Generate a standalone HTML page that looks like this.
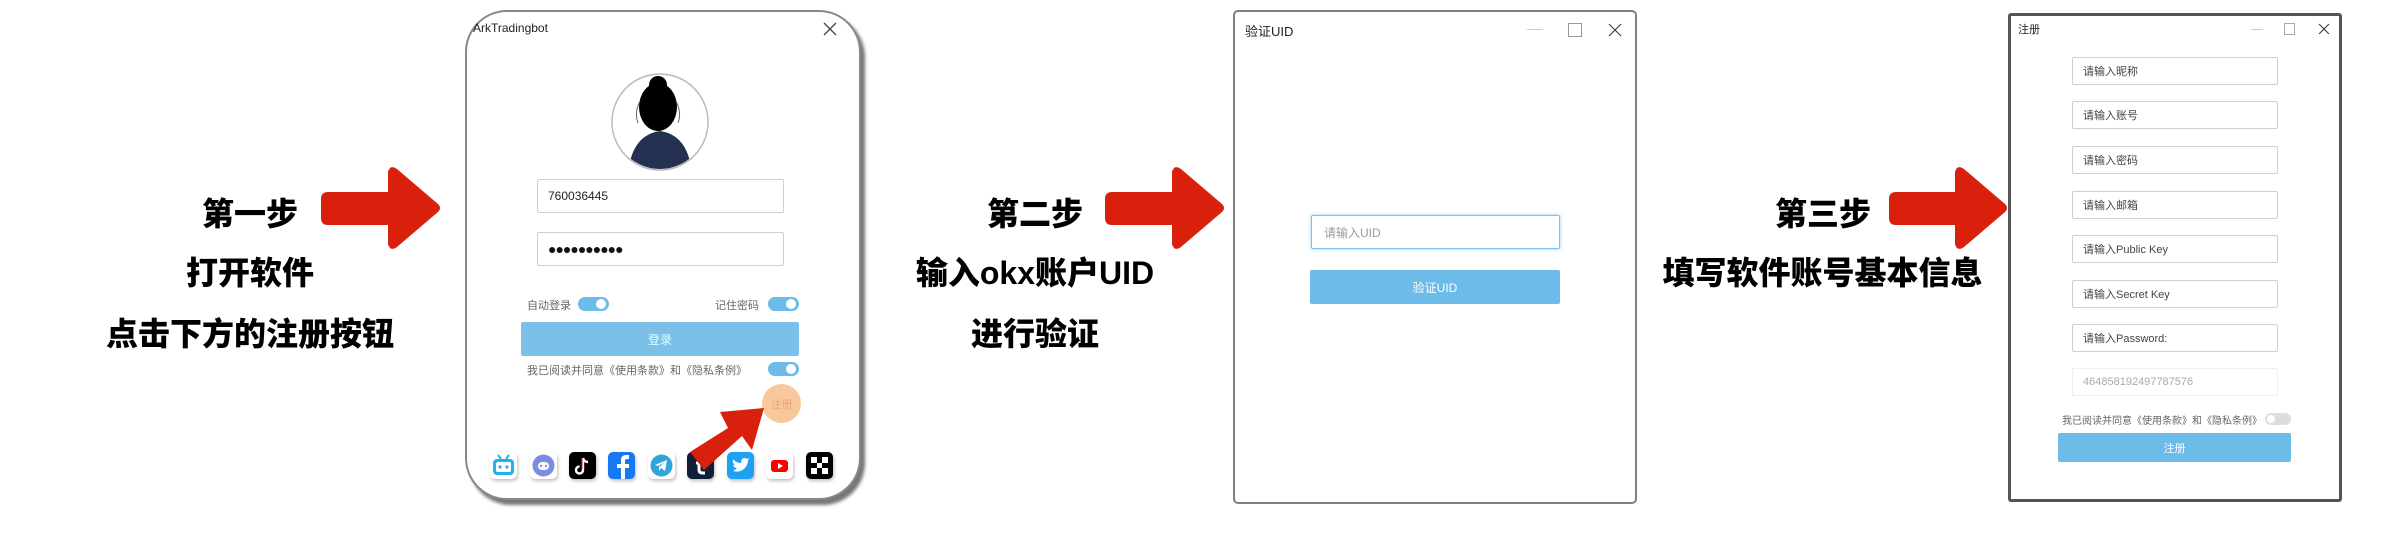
<!DOCTYPE html>
<html><head><meta charset="utf-8"><style>
*{margin:0;padding:0;box-sizing:border-box}
body{width:2399px;height:533px;background:#fff;position:relative;overflow:hidden;font-family:"Liberation Sans","Noto Sans CJK SC",sans-serif}
.a{position:absolute}
.step{position:absolute;font-weight:900;font-size:32px;color:#000;white-space:nowrap;text-align:center;line-height:40px;font-family:"Liberation Sans","Noto Sans CJK SC",sans-serif}
.inp{position:absolute;border:1.5px solid #cfcfcf;border-radius:2px;background:#fff;font-size:11px;color:#444;padding-left:10px;display:flex;align-items:center}
.tg{position:absolute;width:31px;height:14px;border-radius:7px;background:#6cbbe8}
.tg::after{content:"";position:absolute;right:3px;top:2px;width:10px;height:10px;border-radius:50%;background:#fff}
.ic{position:absolute;width:27px;height:27px;border-radius:5px;top:452px;box-shadow:1px 2px 3px rgba(0,0,0,.25)}
</style></head><body>

<svg class="a" style="left:0;top:0" width="2399" height="533">
<g fill="#d9200c">
<path d="M328 192 H388 V172 Q390 164 397 169 L438 204 Q442 208 438 212 L397 247 Q390 252 388 244 V225 H328 Q321 225 321 218 V199 Q321 192 328 192Z"/>
<path d="M1112 192 H1172 V172 Q1174 164 1181 169 L1222 204 Q1226 208 1222 212 L1181 247 Q1174 252 1172 244 V225 H1112 Q1105 225 1105 218 V199 Q1105 192 1112 192Z"/>
<path d="M1896 192 H1955 V172 Q1957 164 1964 169 L2005 204 Q2009 208 2005 212 L1964 247 Q1957 252 1955 244 V225 H1896 Q1889 225 1889 218 V199 Q1889 192 1896 192Z"/>
</g>
</svg>
<div class="step" style="left:150px;top:194px;width:200px">第一步</div>
<div class="step" style="left:150px;top:253px;width:200px">打开软件</div>
<div class="step" style="left:90px;top:314px;width:320px">点击下方的注册按钮</div>

<div class="step" style="left:935px;top:194px;width:200px">第二步</div>
<div class="step" style="left:895px;top:253px;width:280px">输入okx账户UID</div>
<div class="step" style="left:935px;top:314px;width:200px">进行验证</div>

<div class="step" style="left:1723px;top:194px;width:200px">第三步</div>
<div class="step" style="left:1650px;top:253px;width:345px">填写软件账号基本信息</div>

<!-- window 1 -->
<div class="a" style="left:465px;top:10px;width:396px;height:490px;border-radius:42px;border:2px solid #888;background:#fff;box-shadow:4px 5px 3px #777"></div>
<div class="a" style="left:473px;top:21px;font-size:12px;color:#222">ArkTradingbot</div>
<svg class="a" style="left:823px;top:22px" width="14" height="14"><path d="M1 1L13 13M13 1L1 13" stroke="#444" stroke-width="1.3"/></svg>
<svg class="a" style="left:610px;top:73px" width="100" height="100">
<circle cx="50" cy="49" r="48" fill="#fff" stroke="#bbb" stroke-width="1.5"/>
<clipPath id="c"><circle cx="50" cy="49" r="47"/></clipPath>
<g clip-path="url(#c)">
<path d="M18 100 Q22 62 50 58 Q78 62 82 100Z" fill="#243150"/>
<ellipse cx="48" cy="34" rx="19" ry="24" fill="#000"/>
<circle cx="48" cy="12" r="9" fill="#000"/>
<path d="M30 28 Q24 40 28 50 M66 28 Q72 40 68 50" stroke="#666" fill="none"/>
</g></svg>
<div class="inp" style="left:537px;top:179px;width:247px;height:34px;font-size:12px;color:#222">760036445</div>
<div class="inp" style="left:537px;top:232px;width:247px;height:34px;font-size:14px;color:#111;letter-spacing:-1px">●●●●●●●●●●</div>
<div class="a" style="left:527px;top:297px;font-size:11px;color:#666">自动登录</div>
<div class="tg" style="left:578px;top:297px"></div>
<div class="a" style="left:715px;top:297px;font-size:11px;color:#666">记住密码</div>
<div class="tg" style="left:768px;top:297px"></div>
<div class="a" style="left:521px;top:322px;width:278px;height:34px;background:#7cc0ea;border-radius:2px;color:#dff;font-size:12px;display:flex;align-items:center;justify-content:center">登录</div>
<div class="a" style="left:527px;top:362px;font-size:11px;color:#666">我已阅读并同意《使用条款》和《隐私条例》</div>
<div class="tg" style="left:768px;top:362px"></div>
<div class="a" style="left:762px;top:384px;width:39px;height:39px;border-radius:50%;background:#f8c89a;color:#e9a978;font-size:11px;display:flex;align-items:center;justify-content:center">注册</div>
<div class="ic" style="left:490px;background:#fff"><svg width="27" height="27"><rect x="3" y="7" width="21" height="16" rx="4" fill="#1fb3e8"/><rect x="6" y="10" width="15" height="10" rx="2" fill="#fff"/><circle cx="10" cy="15" r="1.6" fill="#1fb3e8"/><circle cx="17" cy="15" r="1.6" fill="#1fb3e8"/><path d="M8 3L11 7M19 3L16 7" stroke="#1fb3e8" stroke-width="2"/></svg></div>
<div class="ic" style="left:530px;background:#fff"><svg width="27" height="27"><circle cx="13.5" cy="13.5" r="11" fill="#7c8ce0"/><rect x="8" y="10" width="11" height="8" rx="4" fill="#fff"/><circle cx="11" cy="14" r="1.2" fill="#7c8ce0"/><circle cx="16" cy="14" r="1.2" fill="#7c8ce0"/></svg></div>
<div class="ic" style="left:569px;background:#000"><svg width="27" height="27"><path d="M14 6V18A3.5 3.5 0 1 1 10.5 14.5M14 6Q15 10 19 10" stroke="#fff" stroke-width="2.4" fill="none"/><path d="M13 6V17" stroke="#e6245a" stroke-width="1"/></svg></div>
<div class="ic" style="left:608px;background:#1877f2"><svg width="27" height="27"><path d="M17 27V16H21V12H17V9Q17 7 19 7H21V3H18Q13 3 13 8V12H9V16H13V27" fill="#fff"/></svg></div>
<div class="ic" style="left:648px;background:#fff"><svg width="27" height="27"><circle cx="13.5" cy="13.5" r="11" fill="#2ea6d9"/><path d="M7 13L19 8L17 19L13 16L11 19L11 15L17 10L10 14Z" fill="#fff"/></svg></div>
<div class="ic" style="left:687px;background:#0f1f35"><svg width="27" height="27"><path d="M12 6V18Q12 21 16 21H18M9 11H17" stroke="#fff" stroke-width="3" fill="none"/></svg></div>
<div class="ic" style="left:727px;background:#1da1f2"><svg width="27" height="27"><path d="M6 19Q12 21 17 17Q21 13 21 8L23 6L20 7Q18 5 15 7Q14 9 14 11Q9 11 6 7Q5 11 8 13L6 13Q7 16 10 16Q8 18 6 19Z" fill="#fff"/></svg></div>
<div class="ic" style="left:766px;background:#fff"><svg width="27" height="27"><rect x="5" y="8" width="17" height="12" rx="3" fill="#f00"/><path d="M12 11V17L17 14Z" fill="#fff"/></svg></div>
<div class="ic" style="left:806px;background:#000"><svg width="27" height="27" fill="#fff"><rect x="5" y="5" width="6" height="6"/><rect x="16" y="5" width="6" height="6"/><rect x="5" y="16" width="6" height="6"/><rect x="16" y="16" width="6" height="6"/><rect x="11" y="11" width="5" height="5"/></svg></div>
<svg class="a" style="left:0;top:0" width="900" height="533"><path d="M690 452 L728 428 L720 412 L764 408 L752 450 L742 436 L704 470 Z" fill="#d9200c"/></svg>

<!-- window 2 -->
<div class="a" style="left:1233px;top:10px;width:404px;height:494px;border:2px solid #808080;border-radius:5px;background:#fff"></div>
<div class="a" style="left:1245px;top:21px;font-size:13px;color:#222">验证UID</div>
<div class="a" style="left:1527px;top:29px;width:16px;height:1px;background:#ccc"></div>
<div class="a" style="left:1568px;top:23px;width:14px;height:14px;border:1px solid #999"></div>
<svg class="a" style="left:1608px;top:23px" width="14" height="14"><path d="M1 1L13 13M13 1L1 13" stroke="#333" stroke-width="1"/></svg>
<div class="inp" style="left:1311px;top:215px;width:249px;height:34px;border:1.5px solid #7fbff0;box-shadow:0 0 4px #9cd0f5;color:#999;font-size:12px;padding-left:12px">请输入UID</div>
<div class="a" style="left:1310px;top:270px;width:250px;height:34px;background:#6cbbe8;border-radius:2px;color:#fff;font-size:12px;display:flex;align-items:center;justify-content:center">验证UID</div>

<!-- window 3 -->
<div class="a" style="left:2008px;top:13px;width:334px;height:489px;border:3px solid #555;border-radius:3px;background:#fff"></div>
<div class="a" style="left:2018px;top:21px;font-size:11px;color:#222">注册</div>
<div class="a" style="left:2251px;top:29px;width:12px;height:1px;background:#ccc"></div>
<div class="a" style="left:2284px;top:23px;width:11px;height:12px;border:1px solid #aaa"></div>
<svg class="a" style="left:2318px;top:23px" width="12" height="12"><path d="M1 1L11 11M11 1L1 11" stroke="#333" stroke-width="1"/></svg>
<div class="inp" style="left:2072px;top:57px;width:206px;height:28px">请输入昵称</div>
<div class="inp" style="left:2072px;top:101px;width:206px;height:28px">请输入账号</div>
<div class="inp" style="left:2072px;top:146px;width:206px;height:28px">请输入密码</div>
<div class="inp" style="left:2072px;top:191px;width:206px;height:28px">请输入邮箱</div>
<div class="inp" style="left:2072px;top:235px;width:206px;height:28px">请输入Public Key</div>
<div class="inp" style="left:2072px;top:280px;width:206px;height:28px">请输入Secret Key</div>
<div class="inp" style="left:2072px;top:324px;width:206px;height:28px">请输入Password:</div>
<div class="inp" style="left:2072px;top:368px;width:206px;height:28px;border-color:#eee;color:#aaa">464858192497787576</div>
<div class="a" style="left:2062px;top:412px;font-size:10px;color:#666">我已阅读并同意《使用条款》和《隐私条例》</div>
<div class="a" style="left:2265px;top:413px;width:26px;height:12px;border-radius:6px;background:#ddd"><div style="position:absolute;left:2px;top:2px;width:8px;height:8px;border-radius:50%;background:#fff"></div></div>
<div class="a" style="left:2058px;top:433px;width:233px;height:29px;background:#6cbbe8;border-radius:2px;color:#fff;font-size:11px;display:flex;align-items:center;justify-content:center">注册</div>
</body></html>
